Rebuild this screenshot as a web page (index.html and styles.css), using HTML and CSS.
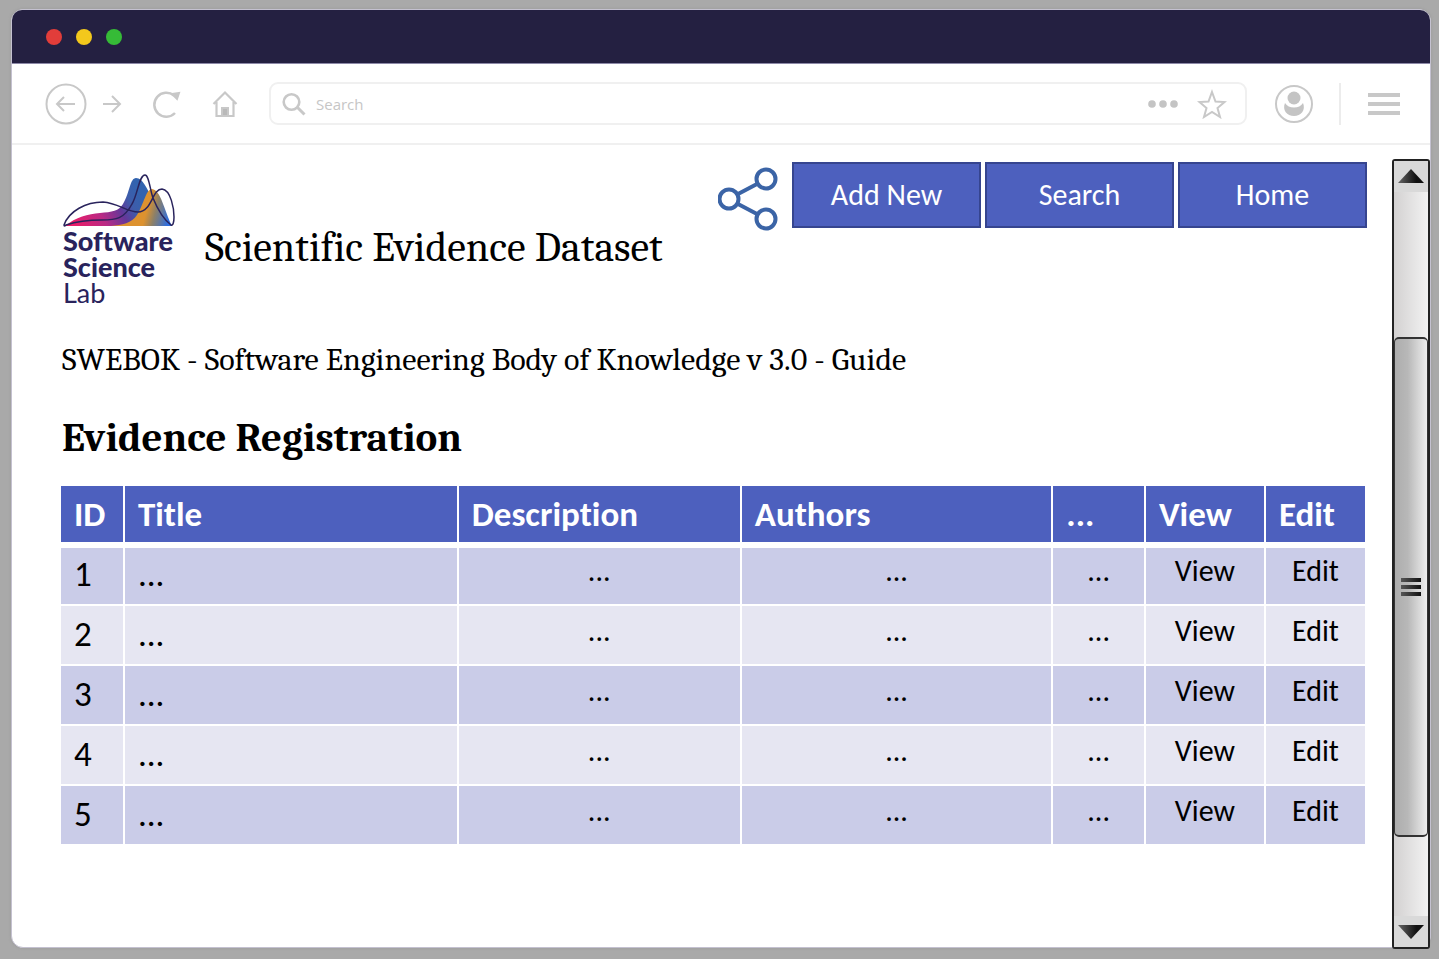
FILE: index.html
```html
<!DOCTYPE html>
<html lang="en">
<head>
<meta charset="utf-8">
<title>Scientific Evidence Dataset</title>
<link rel="stylesheet" href="styles.css">
</head>
<body>
<div class="window">
  <div class="titlebar">
    <span class="dot dot-red"></span>
    <span class="dot dot-yellow"></span>
    <span class="dot dot-green"></span>
  </div>
  <div class="toolbar">
    <button class="tool back" type="button" aria-label="Back">
      <svg width="42" height="42" viewBox="0 0 42 42"><circle cx="21" cy="21" r="19.500"/><path d="M30 21H12M19 14l-7 7 7 7"/></svg>
    </button>
    <button class="tool forward" type="button" aria-label="Forward">
      <svg width="20" height="20" viewBox="0 0 20 20"><path d="M1 10h17M10 2l8 8-8 8"/></svg>
    </button>
    <button class="tool reload" type="button" aria-label="Reload">
      <svg width="30" height="30" viewBox="0 0 30 30"><path d="M23 24A12 12 0 1 1 22 6.500" stroke-width="2.500"/><path d="M20 5l7-1-2 6z" fill="#c8c8c8"/></svg>
    </button>
    <button class="tool home" type="button" aria-label="Home page">
      <svg width="26" height="28" viewBox="0 0 26 28"><path d="M4.500 12v14h17V12M1.500 14L13 2.500l11.500 11.500" stroke-width="2.200"/><path d="M10 18h6v8h-6z" fill="#b9b9b9"/></svg>
    </button>
    <div class="address">
      <svg width="24" height="24" viewBox="0 0 24 24"><circle cx="9.500" cy="10" r="7.800" stroke-width="2.600"/><path d="M15 15l7.500 7.500" stroke-width="3"/></svg>
      <input class="address-input" type="text" placeholder="Search" aria-label="Address or search">
      <button class="tool" type="button" aria-label="More">
        <svg class="solid" width="32" height="10" viewBox="0 0 32 10"><circle cx="5" cy="5" r="3.800"/><circle cx="16" cy="5" r="3.800"/><circle cx="27" cy="5" r="3.800"/></svg>
      </button>
      <button class="tool" type="button" aria-label="Bookmark">
        <svg width="30" height="30" viewBox="0 0 30 30"><path d="M15 3l3.500 9.500 9 .5-7 6 2.500 9-8-5-8 5 2.500-9-7-6 9-.5z"/></svg>
      </button>
    </div>
    <button class="tool account" type="button" aria-label="Account">
      <svg width="40" height="40" viewBox="0 0 40 40"><circle cx="20" cy="20" r="18"/><circle cx="20" cy="14" r="6.500" fill="#c4c4c4" stroke="none"/><path d="M11 19c-3 7 2 13 9 13s12-6 9-13c-2 3-5 4.500-9 4.500s-7-1.500-9-4.500z" fill="#c4c4c4" stroke="none"/></svg>
    </button>
    <span class="divider"></span>
    <button class="tool menu" type="button" aria-label="Menu">
      <svg width="34" height="24" viewBox="0 0 34 24"><path d="M1 3h32M1 12h32M1 21h32" stroke-width="4"/></svg>
    </button>
  </div>
  <div class="viewport">
    <main class="page">
      <header class="header">
        <div class="logo">
          <svg width="112" height="54" viewBox="0 0 112 54" aria-hidden="true">
            <defs>
              <linearGradient id="hill" gradientUnits="userSpaceOnUse" x1="10" y1="52" x2="76" y2="16"><stop offset="0" stop-color="#ee1b66"/><stop offset=".4" stop-color="#b92a85"/><stop offset=".66" stop-color="#633799"/><stop offset=".82" stop-color="#3e5caa"/><stop offset="1" stop-color="#3263af"/></linearGradient>
              <linearGradient id="peak" gradientUnits="userSpaceOnUse" x1="78" y1="34" x2="107" y2="42"><stop offset=".2" stop-color="#dd922f"/><stop offset=".5" stop-color="#8c8068"/><stop offset="1" stop-color="#2e6ee0"/></linearGradient>
            </defs>
            <path fill="url(#hill)" d="M2 52C13 43 25 40 37 39C49 38 56 37 60 30C67 18 67 4 73 4C80 4 84 15 89 24L90 52z"/>
            <path fill="url(#peak)" d="M48 52C59 51 69 49 74 41C81 30 83 15 89 15C98 16 101 36 109 52z"/>
            <path fill="none" stroke="#29235c" stroke-width="1.500" d="M1 51C6 37 23 28 40 28C55 29 64 38 75 38C89 38 89 15 99 15C108 16 111 35 111 43C111 48 110 52 108 51C99 44 94 34 90 24C87 16 86 1 82 1C76 1 75 20 69 30C61 45 53 46 39 46C23 46 12 48 3 51Q1 53 1 51z"/>
          </svg>
          <span class="logo-text"><b>Software<br>Science</b><br>Lab</span>
        </div>
        <h1 class="site-title">Scientific Evidence Dataset</h1>
        <button class="share" type="button" aria-label="Share">
          <svg width="60" height="64" viewBox="0 0 60 64"><path d="M20 27l19-10M20 37l19 10"/><circle cx="11" cy="32" r="9.500"/><circle cx="48" cy="12" r="9.500"/><circle cx="48" cy="52" r="9.500"/></svg>
        </button>
        <nav class="nav">
          <a class="nav-link" href="#">Add New</a>
          <a class="nav-link" href="#">Search</a>
          <a class="nav-link" href="#">Home</a>
        </nav>
      </header>
      <p class="subtitle">SWEBOK - Software Engineering Body of Knowledge v 3.0 - Guide</p>
      <h2 class="section-title">Evidence Registration</h2>
      <table class="evidence">
        <colgroup><col class="c-id"><col class="c-title"><col class="c-desc"><col class="c-authors"><col class="c-more"><col class="c-view"><col class="c-edit"></colgroup>
        <thead>
          <tr><th>ID</th><th>Title</th><th>Description</th><th>Authors</th><th>...</th><th>View</th><th>Edit</th></tr>
        </thead>
        <tbody>
          <tr><td class="lead">1</td><td class="lead">...</td><td>...</td><td>...</td><td>...</td><td><a href="#">View</a></td><td><a href="#">Edit</a></td></tr>
          <tr><td class="lead">2</td><td class="lead">...</td><td>...</td><td>...</td><td>...</td><td><a href="#">View</a></td><td><a href="#">Edit</a></td></tr>
          <tr><td class="lead">3</td><td class="lead">...</td><td>...</td><td>...</td><td>...</td><td><a href="#">View</a></td><td><a href="#">Edit</a></td></tr>
          <tr><td class="lead">4</td><td class="lead">...</td><td>...</td><td>...</td><td>...</td><td><a href="#">View</a></td><td><a href="#">Edit</a></td></tr>
          <tr><td class="lead">5</td><td class="lead">...</td><td>...</td><td>...</td><td>...</td><td><a href="#">View</a></td><td><a href="#">Edit</a></td></tr>
        </tbody>
      </table>
    </main>
    <div class="scrollbar">
      <svg width="0" height="0" class="defs"><defs><linearGradient id="arrow"><stop offset="0" stop-color="#666"/><stop offset=".7" stop-color="#111"/></linearGradient></defs></svg>
      <button class="scroll-button" type="button" aria-label="Scroll up"><svg width="28" height="16" viewBox="0 0 28 16"><path fill="url(#arrow)" d="M14 0l13 14H1z"/></svg></button>
      <div class="track">
        <div class="thumb"><span class="grip"></span><span class="grip"></span><span class="grip"></span></div>
      </div>
      <button class="scroll-button" type="button" aria-label="Scroll down"><svg width="28" height="16" viewBox="0 0 28 16"><path fill="url(#arrow)" d="M14 15l13-14H1z"/></svg></button>
    </div>
  </div>
</div>
</body>
</html>
```
FILE: styles.css
```css
* { box-sizing: border-box; }

body {
  margin: 0;
  min-height: 100vh;
  padding: 9px 8px 11px 11px;
  display: flex;
  background: #a9a9a9;
  color: #000;
  font-family: Calibri, Carlito, Lato, sans-serif;
  font-variant-ligatures: none;
}

button { padding: 0; border: 0; background: none; }
a { color: inherit; text-decoration: none; }
svg { display: block; flex: none; }

.window {
  flex: 1;
  display: flex;
  flex-direction: column;
  border: 1px solid #c4c1d0;
  border-radius: 12px;
  background: #fff;
  box-shadow: 0 0 3px #999;
}

.titlebar {
  display: flex;
  align-items: center;
  gap: 14px;
  height: 54px;
  padding-left: 34px;
  border-bottom: 1px solid #8d89a8;
  border-radius: 10px 10px 0 0;
  background: #242041;
}

.dot { width: 16px; height: 16px; border-radius: 50%; }
.dot-red { background: #e23d3a; }
.dot-yellow { background: #f3c81c; }
.dot-green { background: #36bb37; }

.toolbar {
  display: flex;
  align-items: center;
  height: 81px;
  padding: 0 29px 0 33px;
  border-bottom: 2px solid #f0f0f0;
}

.tool svg, .address svg { fill: none; stroke: #c8c8c8; stroke-width: 2; }
.tool .solid { fill: #c4c4c4; stroke: none; }
.forward { margin-left: 15px; }
.reload { margin-left: 30px; }
.home { margin-left: 30px; }

.address {
  flex: 1;
  display: flex;
  align-items: center;
  gap: 18px;
  height: 43px;
  margin-left: 31px;
  padding: 0 18px 0 11px;
  border: 2px solid #f0f0f0;
  border-radius: 9px;
}

.address-input {
  flex: 1;
  min-width: 0;
  padding: 0;
  border: 0;
  margin-left: -8px;
  outline: 0;
  background: none;
  font: 15px "Open Sans", sans-serif;
}

.address-input::placeholder { color: #c6c6c6; opacity: 1; }
.account { margin-left: 27px; }
.divider { width: 2px; height: 42px; margin: 0 26px 0 25px; background: #ececec; }

.viewport { flex: 1; display: flex; }

.page { flex: 1; padding: 17px 27px 24px 49px; }

.header { display: flex; align-items: flex-start; margin-right: -2px; }

.logo {
  width: 112px;
  margin: 12px 0 0 2px;
  color: #29235c;
  font-family: Lato, sans-serif;
  font-size: 27px;
  line-height: 26px;
}

.logo-text { display: block; }
.logo b { font-weight: 900; }

.site-title, .subtitle, .section-title {
  font-family: Cambria, Caladea, "Liberation Serif", serif;
  font-variant-ligatures: normal;
}

.site-title {
  margin: 62px 0 0 30px;
  font-size: 42px;
  font-weight: 400;
  line-height: 48px;
  white-space: nowrap;
}

.share { margin: 5px 14px 0 auto; }
.share svg { fill: none; stroke: #3b64a6; stroke-width: 4; }

.nav { display: flex; gap: 4px; }

.nav-link {
  width: 189px;
  border: 2px solid #36458f;
  background: #4d60be;
  color: #fff;
  font-size: 30px;
  line-height: 62px;
  text-align: center;
}

.subtitle { margin: 36px 0 0 1px; font-size: 32px; line-height: 36px; }
.section-title { margin: 36px 0 0 1px; font-size: 41px; line-height: 48px; }

.evidence {
  width: 100%;
  margin-top: 24px;
  border-spacing: 0;
  table-layout: fixed;
}

.c-id { width: 4.9%; }
.c-title { width: 25.6%; }
.c-desc { width: 21.7%; }
.c-authors { width: 23.9%; }
.c-more { width: 7.1%; }
.c-view { width: 9.2%; }
.c-edit { width: 7.6%; }

.evidence th, .evidence td { border-right: 2px solid #fff; }
.evidence th:last-child, .evidence td:last-child { border-right: 0; }

.evidence th {
  height: 60px;
  padding: 0 0 0 13px;
  border-bottom: 4px solid #fff;
  background: #4d60be;
  color: #fff;
  font-size: 35px;
  line-height: 40px;
  text-align: left;
}

.evidence td {
  height: 60px;
  padding: 8px 0 0;
  border-bottom: 2px solid #fff;
  background: #cacce8;
  font-size: 30px;
  line-height: 34px;
  text-align: center;
  vertical-align: top;
}

.evidence tr:nth-child(even) td { background: #e6e6f2; }
.evidence tbody tr:first-child td { border-top: 2px solid #fff; }
.evidence tbody tr:last-child td { height: 58px; border-bottom: 0; }
.evidence tbody tr:first-child td { padding-top: 6px; }

.evidence td.lead {
  padding-left: 13px;
  font-size: 35px;
  line-height: 41px;
  text-align: left;
}

.scrollbar {
  display: flex;
  flex-direction: column;
  width: 38px;
  margin: 14px 0 -2px;
  border: 2px solid #222;
  border-radius: 3px;
  background: linear-gradient(90deg, #d3d1d1, #f2f2f2);
}

.defs { position: absolute; }

.scroll-button {
  display: flex;
  align-items: center;
  justify-content: center;
  height: 31px;
  background: #d9d9d9;
}

.track { flex: 1; display: flex; flex-direction: column; }
.track::before { content: ""; flex: 146; }
.track::after { content: ""; flex: 79; }

.thumb {
  flex: 499;
  display: flex;
  flex-direction: column;
  align-items: center;
  justify-content: center;
  gap: 3px;
  border: 2px solid #333;
  border-width: 2px 1px;
  border-radius: 5px;
  background: linear-gradient(90deg, #adadad, #b8b8b8 40%, #eee);
}

.grip { width: 20px; height: 4px; background: linear-gradient(90deg, #555, #111); }
```
